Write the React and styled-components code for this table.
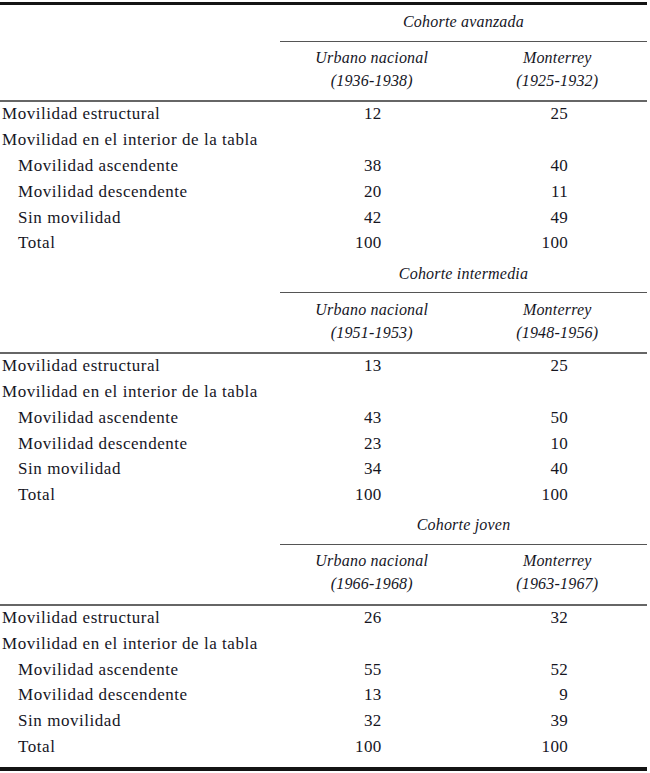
import React from "react";
import styled, { createGlobalStyle } from "styled-components";

const Global = createGlobalStyle`
  html, body { margin: 0; padding: 0; background: #ffffff; }
  body { font-family: "Liberation Serif", "Times New Roman", serif; color: #16161f; }
`;

const Table = styled.div`
  width: 647px;
  margin-top: 2px;
  border-top: 3px solid #141414;
  border-bottom: 4px solid #141414;
  padding-bottom: 7px;
`;

const TitleRow = styled.div`
  display: grid;
  grid-template-columns: 280px 1fr;
  height: 36.5px;
`;

const TitleCell = styled.div`
  grid-column: 2;
  display: flex;
  align-items: center;
  justify-content: center;
  border-bottom: 1px solid #555;
  font-style: italic;
  font-size: 16px;
  letter-spacing: 0.2px;
  padding-bottom: 2px;
  box-sizing: border-box;
`;

const SubHeader = styled.div`
  display: grid;
  grid-template-columns: 280px 1fr 1fr;
  height: 58.5px;
  border-bottom: 2px solid #666;
`;

const SubCell = styled.div`
  display: flex;
  flex-direction: column;
  align-items: center;
  justify-content: center;
  font-style: italic;
  font-size: 16px;
  line-height: 23px;
  letter-spacing: 0.2px;
  padding-bottom: 4px;
  padding-left: ${(p) => p.$shift || 0}px;
`;

const Row = styled.div`
  display: grid;
  grid-template-columns: 280px 1fr 1fr;
  height: 25.8px;
  align-items: center;
  font-size: 17px;
  letter-spacing: 0.55px;
`;

const Label = styled.div`
  padding-left: ${(p) => (p.$indent ? 18 : 2)}px;
  padding-bottom: 1px;
  white-space: nowrap;
`;

const Num = styled.div`
  text-align: right;
  padding-right: ${(p) => p.$pr}px;
  padding-bottom: 1px;
  letter-spacing: 0.3px;
`;

const sections = [
  {
    title: "Cohorte avanzada",
    a: "(1936-1938)",
    b: "(1925-1932)",
    vals: [["12", "25"], null, ["38", "40"], ["20", "11"], ["42", "49"], ["100", "100"]],
  },
  {
    title: "Cohorte intermedia",
    a: "(1951-1953)",
    b: "(1948-1956)",
    vals: [["13", "25"], null, ["43", "50"], ["23", "10"], ["34", "40"], ["100", "100"]],
  },
  {
    title: "Cohorte joven",
    a: "(1966-1968)",
    b: "(1963-1967)",
    vals: [["26", "32"], null, ["55", "52"], ["13", "9"], ["32", "39"], ["100", "100"]],
  },
];

const labels = [
  ["Movilidad estructural", false],
  ["Movilidad en el interior de la tabla", false],
  ["Movilidad ascendente", true],
  ["Movilidad descendente", true],
  ["Sin movilidad", true],
  ["Total", true],
];

export default function App() {
  return (
    <>
      <Global />
      <Table>
        {sections.map((s) => (
          <React.Fragment key={s.title}>
            <TitleRow>
              <TitleCell>{s.title}</TitleCell>
            </TitleRow>
            <SubHeader>
              <div />
              <SubCell>
                <span>Urbano nacional</span>
                <span>{s.a}</span>
              </SubCell>
              <SubCell $shift={4}>
                <span>Monterrey</span>
                <span>{s.b}</span>
              </SubCell>
            </SubHeader>
            {labels.map(([text, indent], i) => (
              <Row key={text}>
                <Label $indent={indent}>{text}</Label>
                <Num $pr={82}>{s.vals[i] ? s.vals[i][0] : ""}</Num>
                <Num $pr={79}>{s.vals[i] ? s.vals[i][1] : ""}</Num>
              </Row>
            ))}
          </React.Fragment>
        ))}
      </Table>
    </>
  );
}
